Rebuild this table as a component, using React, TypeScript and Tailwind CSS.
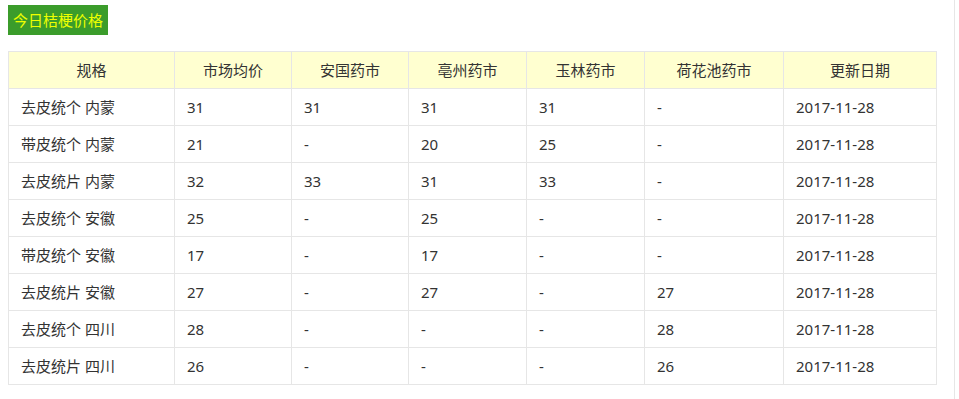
import React from 'react';

const headers = ['规格', '市场均价', '安国药市', '亳州药市', '玉林药市', '荷花池药市', '更新日期'];
const widths = ['w-[166px]', 'w-[117px]', 'w-[117px]', 'w-[118px]', 'w-[118px]', 'w-[139px]', 'w-[153px]'];

const rows: string[][] = [
  ['去皮统个 内蒙', '31', '31', '31', '31', '-', '2017-11-28'],
  ['带皮统个 内蒙', '21', '-', '20', '25', '-', '2017-11-28'],
  ['去皮统片 内蒙', '32', '33', '31', '33', '-', '2017-11-28'],
  ['去皮统个 安徽', '25', '-', '25', '-', '-', '2017-11-28'],
  ['带皮统个 安徽', '17', '-', '17', '-', '-', '2017-11-28'],
  ['去皮统片 安徽', '27', '-', '27', '-', '27', '2017-11-28'],
  ['去皮统个 四川', '28', '-', '-', '-', '28', '2017-11-28'],
  ['去皮统片 四川', '26', '-', '-', '-', '26', '2017-11-28'],
];

const App: React.FC = () => {
  return (
    <div
      className="w-[955px] h-[399px] bg-white border-r border-[#e6e6e6] text-[#333] text-[15px]"
      style={{ fontFamily: '"Noto Sans", "Noto Sans CJK SC", sans-serif' }}
    >
      <div className="pt-[5px] pl-[8px]">
        <span className="inline-flex items-center h-[30px] px-[5px] bg-[#3b9c2b] text-[#eeff00] text-[15px]">
          今日桔梗价格
        </span>
      </div>

      <table className="ml-[8px] mt-[16px] w-[928px] table-fixed border-collapse">
        <thead>
          <tr className="bg-[#ffffd0]">
            {headers.map((h, i) => (
              <th key={h} className={`${widths[i]} h-[37px] p-0 font-normal text-center border border-[#e6e6e6]`}>
                {h}
              </th>
            ))}
          </tr>
        </thead>
        <tbody>
          {rows.map((r, ri) => (
            <tr key={ri}>
              {r.map((c, ci) => (
                <td key={ci} className="h-[37px] py-0 px-[12px] text-left border border-[#e6e6e6]">
                  {c}
                </td>
              ))}
            </tr>
          ))}
        </tbody>
      </table>
    </div>
  );
};

export default App;
